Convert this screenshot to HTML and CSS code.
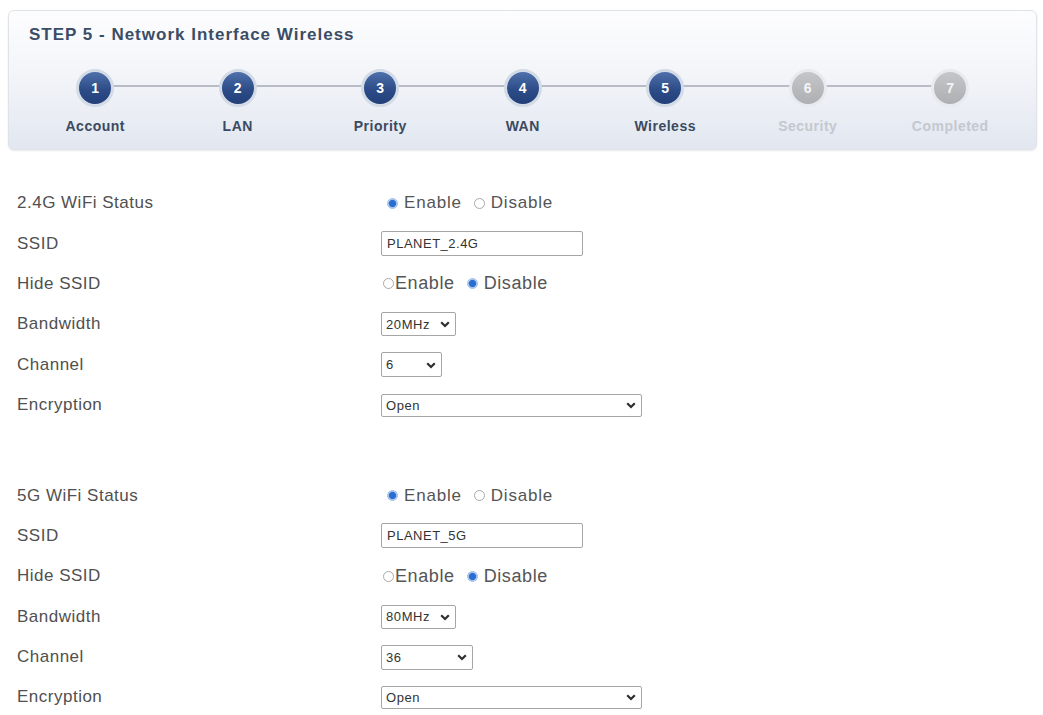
FILE: index.html
```html
<!DOCTYPE html>
<html lang="en">
<head>
<meta charset="utf-8">
<title>STEP 5 - Network Interface Wireless</title>
<link rel="stylesheet" href="styles.css">
</head>
<body>
<div class="wizard">
  <div class="wizard-title">STEP 5 - Network Interface Wireless</div>
  <ol class="steps">
    <li class="step"><span class="dot">1</span><span class="step-label">Account</span></li>
    <li class="step"><span class="dot">2</span><span class="step-label">LAN</span></li>
    <li class="step"><span class="dot">3</span><span class="step-label">Priority</span></li>
    <li class="step"><span class="dot">4</span><span class="step-label">WAN</span></li>
    <li class="step"><span class="dot">5</span><span class="step-label">Wireless</span></li>
    <li class="step todo"><span class="dot">6</span><span class="step-label">Security</span></li>
    <li class="step todo"><span class="dot">7</span><span class="step-label">Completed</span></li>
  </ol>
</div>

<form class="wifi">
  <section class="band">
    <div class="row"><span class="label">2.4G WiFi Status</span>
      <div class="ctrl radios">
        <label class="opt"><input type="radio" name="st24" checked><span>Enable</span></label>
        <label class="opt"><input type="radio" name="st24"><span>Disable</span></label>
      </div></div>
    <div class="row"><span class="label">SSID</span>
      <div class="ctrl"><input class="text" type="text" value="PLANET_2.4G"></div></div>
    <div class="row"><span class="label">Hide SSID</span>
      <div class="ctrl radios tight">
        <label class="opt"><input type="radio" name="hd24"><span>Enable</span></label>
        <label class="opt"><input type="radio" name="hd24" checked><span>Disable</span></label>
      </div></div>
    <div class="row"><span class="label">Bandwidth</span>
      <div class="ctrl"><span class="select w-bw"><select><option>20MHz</option></select><svg class="chev" viewBox="0 0 10 7"><path d="M1.2 1.2 L5 5 L8.8 1.2"/></svg></span></div></div>
    <div class="row"><span class="label">Channel</span>
      <div class="ctrl"><span class="select w-ch"><select><option>6</option></select><svg class="chev" viewBox="0 0 10 7"><path d="M1.2 1.2 L5 5 L8.8 1.2"/></svg></span></div></div>
    <div class="row"><span class="label">Encryption</span>
      <div class="ctrl"><span class="select w-enc"><select><option>Open</option></select><svg class="chev" viewBox="0 0 10 7"><path d="M1.2 1.2 L5 5 L8.8 1.2"/></svg></span></div></div>
  </section>

  <section class="band">
    <div class="row"><span class="label">5G WiFi Status</span>
      <div class="ctrl radios">
        <label class="opt"><input type="radio" name="st5" checked><span>Enable</span></label>
        <label class="opt"><input type="radio" name="st5"><span>Disable</span></label>
      </div></div>
    <div class="row"><span class="label">SSID</span>
      <div class="ctrl"><input class="text" type="text" value="PLANET_5G"></div></div>
    <div class="row"><span class="label">Hide SSID</span>
      <div class="ctrl radios tight">
        <label class="opt"><input type="radio" name="hd5"><span>Enable</span></label>
        <label class="opt"><input type="radio" name="hd5" checked><span>Disable</span></label>
      </div></div>
    <div class="row"><span class="label">Bandwidth</span>
      <div class="ctrl"><span class="select w-bw"><select><option>80MHz</option></select><svg class="chev" viewBox="0 0 10 7"><path d="M1.2 1.2 L5 5 L8.8 1.2"/></svg></span></div></div>
    <div class="row"><span class="label">Channel</span>
      <div class="ctrl"><span class="select w-ch5"><select><option>36</option></select><svg class="chev" viewBox="0 0 10 7"><path d="M1.2 1.2 L5 5 L8.8 1.2"/></svg></span></div></div>
    <div class="row"><span class="label">Encryption</span>
      <div class="ctrl"><span class="select w-enc"><select><option>Open</option></select><svg class="chev" viewBox="0 0 10 7"><path d="M1.2 1.2 L5 5 L8.8 1.2"/></svg></span></div></div>
  </section>
</form>
</body>
</html>
```

FILE: styles.css
```css
html, body {
  background: #fff;
}
body {
  margin: 0;
  padding: 10px 0 0 8px;
  font-family: "Liberation Sans", Arial, sans-serif;
  color: #555;
}

/* ---------- wizard header ---------- */
.wizard {
  box-sizing: border-box;
  width: 1029px;
  border: 1px solid #dfe3e8;
  border-radius: 6px;
  background: linear-gradient(180deg, #fdfdfe 0%, #f3f5f9 45%, #e2e7f0 100%);
  box-shadow: 0 1px 2px rgba(120, 130, 150, 0.18);
  padding: 14px 0 15px 15px;
}
.wizard-title {
  padding-left: 5px;
  font-size: 17px;
  line-height: 20px;
  font-weight: bold;
  letter-spacing: 1px;
  color: #3b4d66;
}
.steps {
  list-style: none;
  margin: 24px 0 0 0;
  padding: 0;
  display: grid;
  grid-template-columns: repeat(7, 142.5px);
  position: relative;
}
.steps::before {
  content: "";
  position: absolute;
  left: 71.25px;
  right: 71.25px;
  top: 16px;
  height: 2px;
  background: #b8bdc5;
}
.step {
  position: relative;
  z-index: 1;
  display: flex;
  flex-direction: column;
  align-items: center;
}
.dot {
  box-sizing: border-box;
  width: 38px;
  height: 38px;
  border-radius: 50%;
  border: 3px solid #d3dbe7;
  background: linear-gradient(180deg, #4f70aa 0%, #2d4c88 55%, #223f79 100%);
  color: #fff;
  font-size: 14px;
  font-weight: bold;
  display: flex;
  align-items: center;
  justify-content: center;
}
.step-label {
  margin-top: 11px;
  font-size: 14px;
  line-height: 16px;
  font-weight: bold;
  letter-spacing: 0.5px;
  color: #3b4a60;
}
.todo .dot {
  border-color: #e7eaef;
  background: linear-gradient(180deg, #c4c6c9 0%, #adafb3 100%);
  color: #f4f4f4;
}
.todo .step-label {
  color: #c4c8cf;
}

/* ---------- form ---------- */
.wifi {
  margin: 33px 0 0 0;
  padding-left: 9px;
}
.band + .band {
  margin-top: 50px;
}
.row {
  display: grid;
  grid-template-columns: 364px 1fr;
  align-items: center;
  height: 40.4px;
}
.label {
  font-size: 17px;
  letter-spacing: 0.5px;
  color: #505050;
}
.ctrl {
  display: flex;
  align-items: center;
}

/* radios */
.radios {
  gap: 12px;
  padding-left: 6px;
}
.opt {
  display: inline-flex;
  align-items: center;
  gap: 6px;
  font-size: 17px;
  letter-spacing: 0.8px;
  color: #555;
}
.opt input {
  appearance: none;
  -webkit-appearance: none;
  box-sizing: border-box;
  width: 11px;
  height: 11px;
  margin: 0;
  border: 1px solid #a9a9a9;
  border-radius: 50%;
  background: #fff;
}
.opt input:checked {
  border-color: #9dbde8;
  background: radial-gradient(circle, #2a6dd3 0 3.2px, #8fb6ec 3.8px, #e6effb 5px);
}
.tight {
  gap: 12px;
  padding-left: 2px;
}
.tight .opt {
  gap: 1px;
  font-size: 18px;
  letter-spacing: 0.6px;
}
.tight .opt + .opt {
  gap: 6px;
}

/* text input */
.text {
  box-sizing: border-box;
  width: 202px;
  height: 25px;
  margin: 0;
  padding: 0 5px;
  border: 1px solid #a6a6a6;
  border-radius: 2px;
  font-family: "Liberation Sans", Arial, sans-serif;
  font-size: 13px;
  letter-spacing: 0.5px;
  color: #333;
  background: #fff;
}

/* selects */
.select {
  position: relative;
  display: inline-block;
}
.select select {
  appearance: none;
  -webkit-appearance: none;
  box-sizing: border-box;
  width: 100%;
  height: 24px;
  margin: 0;
  padding: 0 0 0 4px;
  border: 1px solid #a6a6a6;
  border-radius: 2px;
  background: #fff;
  font-family: "Liberation Sans", Arial, sans-serif;
  font-size: 13px;
  letter-spacing: 0.6px;
  color: #333;
}
.chev {
  position: absolute;
  right: 6px;
  top: 50%;
  width: 10px;
  height: 7px;
  margin-top: -3px;
  pointer-events: none;
}
.chev path {
  fill: none;
  stroke: #2e2e2e;
  stroke-width: 2.2;
}
.w-bw { width: 75px; }
.w-ch { width: 61px; }
.w-ch select { height: 25px; }
.w-ch5 { width: 92px; }
.w-ch5 select { height: 25px; }
.w-enc { width: 261px; }
.w-enc select { height: 23px; }
```
